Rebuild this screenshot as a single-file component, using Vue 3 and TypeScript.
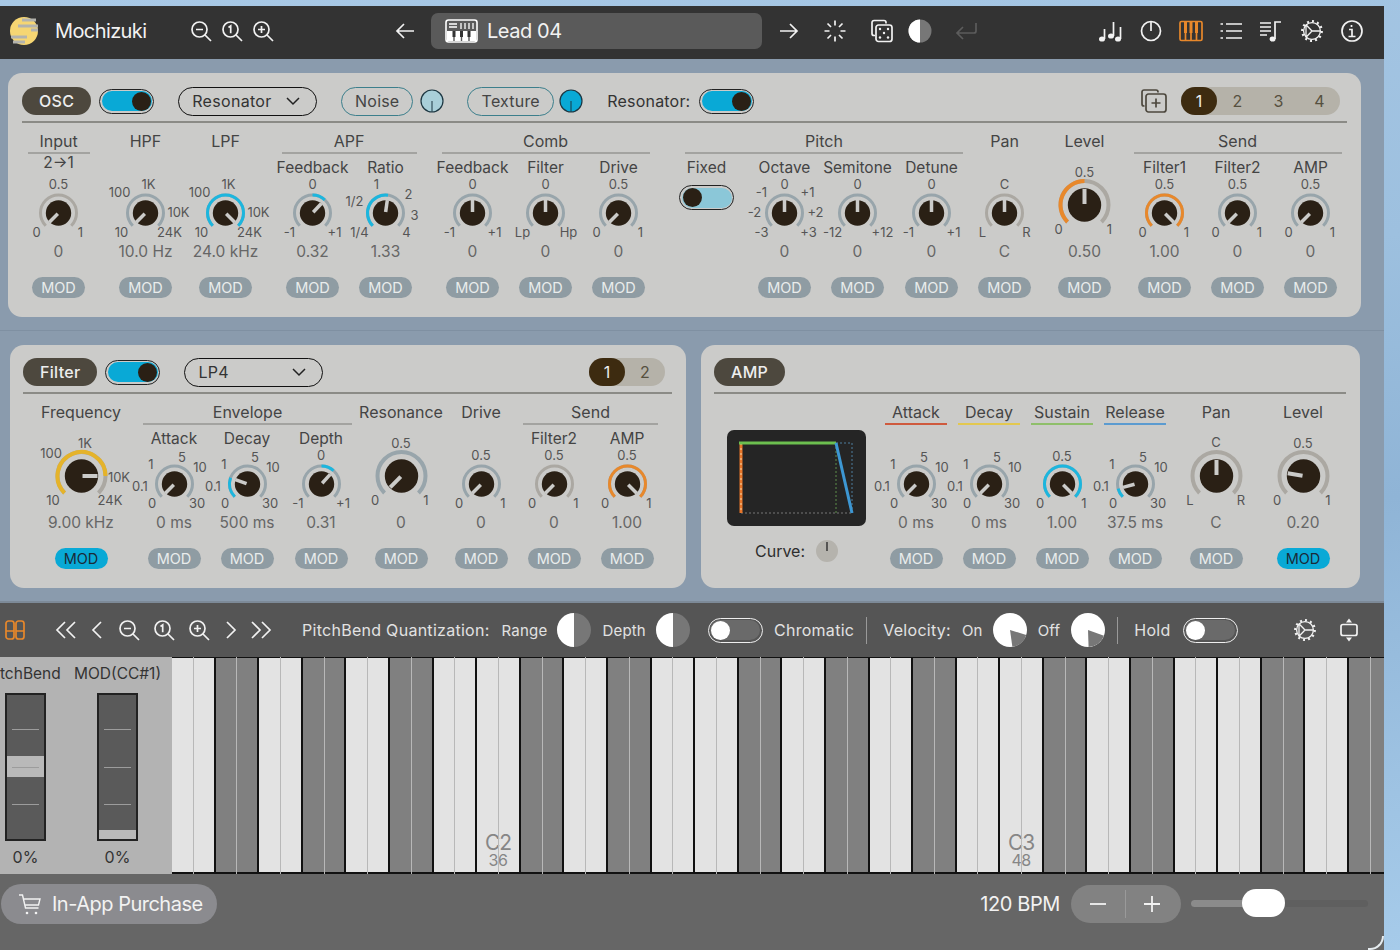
<template>
  <div class="desktop">
    <svg class="defs" width="0" height="0">
      <symbol id="zoom-out" viewBox="0 0 24 24"><circle cx="10.5" cy="10.5" r="7.5" /><path d="M16 16l6 6M7 10.5h7" /></symbol>
      <symbol id="zoom-in" viewBox="0 0 24 24"><circle cx="10.5" cy="10.5" r="7.5" /><path d="M16 16l6 6M7 10.5h7M10.5 7v7" /></symbol>
      <symbol id="zoom-one" viewBox="0 0 24 24"><circle cx="10.5" cy="10.5" r="7.5" /><path d="M16 16l6 6M8.5 8.5l2.2-1.6v7.4" /></symbol>
      <symbol id="gear" viewBox="0 0 24 24">
        <circle cx="12" cy="12" r="8.4" />
        <circle cx="12" cy="12" r="9.8" stroke-width="2.2" stroke-dasharray="2 3.1" />
        <path d="M12 12h8M12 12L6 5.8M12 12l-6 6.2M6 5.8v12.4" />
      </symbol>
    </svg>

    <div class="window">
      <header class="titlebar">
        <svg class="logo" width="30" height="30" viewBox="0 0 30 30">
          <circle cx="16" cy="15" r="14" fill="#f6d673" />
          <path d="M14 4h14M10 10h23M23 14h9M3 21h16M5 26h12" stroke="#b3b3ae" stroke-width="3" />
        </svg>
        <span class="app-name">Mochizuki</span>
        <svg class="ico"><use href="#zoom-out" /></svg>
        <svg class="ico ml-7"><use href="#zoom-one" /></svg>
        <svg class="ico ml-7"><use href="#zoom-in" /></svg>
        <svg class="ico ml-118" viewBox="0 0 24 24"><path d="M21 12H4M11 5l-7 7 7 7" /></svg>
        <div class="preset">
          <svg class="preset-ico" width="33" height="24" viewBox="0 0 33 24">
            <rect x="1" y="1" width="31" height="22" rx="2.5" fill="none" stroke="#fff" stroke-width="1.6" />
            <path d="M4 5h8M4 8h8M16 4v6M20 4v6M24 4v6M28 4v6" stroke="#fff" stroke-width="1.3" fill="none" />
            <path d="M2 12h29v10H2z" fill="#fff" />
            <path d="M9 12v10M16.5 12v10M24 12v10" stroke="#5a5a5a" stroke-width="1.4" />
            <path d="M7.5 12h3v6h-3zM15 12h3v6h-3zM22.5 12h3v6h-3z" fill="#333" />
          </svg>
          <span>Lead 04</span>
        </div>
        <svg class="ico ml-15" viewBox="0 0 24 24"><path d="M3 12h17M13 5l7 7-7 7" /></svg>
        <svg class="ico ml-22" viewBox="0 0 24 24"><path d="M12 1.5v5M12 17.5v5M1.5 12h5M17.5 12h5M4.5 4.5L8 8M16 16l3.5 3.5M19.5 4.5L16 8M8 16l-3.5 3.5" /></svg>
        <svg class="ico ml-23" viewBox="0 0 24 24">
          <path d="M16 4.5V3.5a2 2 0 0 0-2-2H4a2 2 0 0 0-2 2v11a2 2 0 0 0 2 2h1" />
          <rect x="6" y="6" width="16" height="16.5" rx="2.5" />
          <circle cx="10" cy="10" r="1.2" class="dot" /><circle cx="18" cy="10" r="1.2" class="dot" /><circle cx="14" cy="14" r="1.2" class="dot" /><circle cx="10" cy="18.5" r="1.2" class="dot" /><circle cx="18" cy="18.5" r="1.2" class="dot" />
        </svg>
        <svg class="ml-14" width="24" height="24" viewBox="0 0 24 24">
          <circle cx="12" cy="12" r="11.5" fill="#777" /><path d="M12 .5a11.5 11.5 0 0 0 0 23z" fill="#fff" />
        </svg>
        <svg class="ico ico-dim ml-22" viewBox="0 0 24 24"><path d="M22 4v8a2 2 0 0 1-2 2H3M9 8l-6 6 6 6" /></svg>

        <div class="title-right">
          <svg class="ico ico-fill" viewBox="0 0 24 24">
            <ellipse cx="4" cy="20" rx="3" ry="2.6" /><ellipse cx="13" cy="17" rx="3" ry="2.6" /><ellipse cx="20" cy="20" rx="3" ry="2.6" />
            <path class="thin" d="M6.5 20V10M15.5 17V3M22.5 20V8" />
          </svg>
          <svg class="ico" viewBox="0 0 24 24"><circle cx="12" cy="12" r="9.5" /><path d="M12 2.5V12" /></svg>
          <svg class="ico ico-orange" viewBox="0 0 24 24">
            <rect x="1" y="2.5" width="22" height="19" rx="1.5" />
            <path d="M6.5 3v18M12 3v18M17.5 3v18" />
            <path d="M5 3h3v11H5zM10.5 3h3v11h-3zM16 3h3v11h-3z" class="solid" />
          </svg>
          <svg class="ico" viewBox="0 0 24 24"><path d="M7 5h16M7 12h16M7 19h16M1.5 5h2.5M1.5 12h2.5M1.5 19h2.5" /></svg>
          <svg class="ico" viewBox="0 0 24 24">
            <path d="M1 4h11M1 8h11M1 12h11M1 16h7M16 20V3h6" />
            <ellipse cx="13.5" cy="20" rx="3" ry="2.6" class="dot" />
          </svg>
          <svg class="ico ico-gear"><use href="#gear" /></svg>
          <svg class="ico" viewBox="0 0 24 24"><circle cx="12" cy="12" r="10" /><path d="M9 10.5h3v7M8.5 17.5h7M11.5 6v2" /></svg>
        </div>
      </header>

      <main class="rack">
        <section v-for="p in panels" :key="p.name" class="panel" :class="p.cls">
          <div class="panel-head">
            <span class="name-pill">{{ p.name }}</span>
            <template v-if="p.cls === 'osc'">
              <div class="toggle ml-8"><i class="toggle-fill on"><b /></i></div>
              <div class="select ml-24"><span>Resonator</span><svg width="16" height="10" viewBox="0 0 16 10"><path d="M2 2l6 6 6-6" /></svg></div>
              <span class="src-pill noise ml-24">Noise</span>
              <svg class="mini ml-7" width="24" height="24" viewBox="0 0 24 24"><circle cx="12" cy="12" r="11" fill="#a9cfd9" /><path d="M12 12v11" /></svg>
              <span class="src-pill texture ml-23">Texture</span>
              <svg class="mini ml-5" width="24" height="24" viewBox="0 0 24 24"><circle cx="12" cy="12" r="11" fill="#09a9d6" /><path d="M12 12v11" /></svg>
              <span class="res-label ml-24">Resonator:</span>
              <div class="toggle ml-8"><i class="toggle-fill on"><b /></i></div>
            </template>
            <template v-if="p.cls === 'filter'">
              <div class="toggle ml-8"><i class="toggle-fill on"><b /></i></div>
              <div class="select ml-24"><span>LP4</span><svg width="16" height="10" viewBox="0 0 16 10"><path d="M2 2l6 6 6-6" /></svg></div>
            </template>
            <svg v-if="p.cls === 'osc'" class="layer-add" width="26" height="24" viewBox="0 0 26 24">
              <path d="M17 3.5V3a2 2 0 0 0-2-2H3a2 2 0 0 0-2 2v12a2 2 0 0 0 2 2h.5" />
              <rect x="5" y="5" width="20" height="18" rx="2.5" />
              <path d="M15 9.5v9M10.5 14h9" />
            </svg>
            <div v-if="p.tabs" class="tabs">
              <span v-for="(t, i) in p.tabs" :key="t" class="tab" :class="{ active: i === 0 }">{{ t }}</span>
            </div>
          </div>

          <div class="panel-body">
            <div v-if="p.cls === 'amp'" class="scope-col">
              <svg class="scope" width="139" height="96" viewBox="0 0 139 96">
                <rect width="139" height="96" rx="7" fill="#252525" />
                <path d="M14 83h111" stroke="#777" stroke-width="1" stroke-dasharray="2 2" fill="none" />
                <path d="M109 13v70" stroke="#5f8f4a" stroke-width="1" stroke-dasharray="2 2" fill="none" />
                <path d="M109 13h16v70" stroke="#4f7f9f" stroke-width="1" stroke-dasharray="2 2" fill="none" />
                <path d="M14 13v70" stroke="#e8762a" stroke-width="3" fill="none" />
                <path d="M14 13v70" stroke="#f3d6a8" stroke-width="1" stroke-dasharray="2 3" fill="none" />
                <path d="M12 13h97" stroke="#6cbf4f" stroke-width="3" fill="none" />
                <path d="M109 13l16 70" stroke="#3d97d3" stroke-width="3" fill="none" />
              </svg>
              <div class="curve">
                <span>Curve:</span>
                <svg width="22" height="22" viewBox="0 0 22 22"><circle cx="11" cy="11" r="11" fill="#b5b3ad" /><path d="M11 2v9" stroke="#222" stroke-width="1.3" /></svg>
              </div>
            </div>

            <div v-for="g in p.groups" :key="g.title + g.ml" class="group" :style="{ marginLeft: g.ml + 'px' }">
              <div class="g-title" :class="[g.line ? 'has-line' : '', g.cls]" :style="g.color ? { borderBottomColor: g.color } : undefined">{{ g.title }}</div>
              <div class="g-cols">
                <div v-for="k in g.knobs" :key="k.sub + k.val + k.a" class="cell" :style="{ marginLeft: (k.ml || 0) + 'px' }">
                  <div class="sub" :class="{ raised: k.sub === '2→1' }">{{ k.sub }}</div>
                  <div v-if="k.fixed" class="dial"><div class="toggle fixed-toggle"><i class="toggle-fill off"><b /></i></div></div>
                  <div v-else class="dial">
                    <svg width="73" height="62" viewBox="0 0 73 62">
                      <path :d="arc(k, -135, 135)" fill="none" :stroke="k.warm ? '#aba8a2' : '#98a5ab'" :stroke-width="k.big ? 4 : 3" />
                      <path v-if="k.tone" :d="arc(k, k.from ?? -135, k.to ?? k.a)" fill="none" :stroke="tones[k.tone]" :stroke-width="k.big ? 4 : 3" />
                      <circle cx="36.5" :cy="cy(k)" :r="k.big ? 16.7 : 12.7" fill="#2a2015" />
                      <path :d="pointer(k)" stroke="#cbcbc9" :stroke-width="k.big ? 4 : 3.5" />
                    </svg>
                    <span v-for="l in k.labels" :key="l[0]" class="tick" :style="{ left: 36.5 + l[1] + 'px', top: cy(k) + l[2] + 'px' }">{{ l[0] }}</span>
                  </div>
                  <div v-if="!k.fixed" class="val">{{ k.val }}</div>
                  <div v-if="!k.fixed" class="mod" :class="{ active: k.modOn }">MOD</div>
                </div>
              </div>
            </div>
          </div>
        </section>
      </main>

      <div class="toolbar">
        <svg class="ico ico-orange ml-3" viewBox="0 0 24 24"><rect x="3" y="3" width="8" height="18" rx="2.5" /><rect x="13" y="3" width="8" height="18" rx="2.5" /><path d="M3 13h8M13 13h8" /></svg>
        <svg class="ico ml-27" viewBox="0 0 24 24"><path d="M11 4l-8 8 8 8M21 4l-8 8 8 8" /></svg>
        <svg class="ico ml-7" viewBox="0 0 24 24"><path d="M16 4l-8 8 8 8" /></svg>
        <svg class="ico ml-8"><use href="#zoom-out" /></svg>
        <svg class="ico ml-11"><use href="#zoom-one" /></svg>
        <svg class="ico ml-11"><use href="#zoom-in" /></svg>
        <svg class="ico ml-8" viewBox="0 0 24 24"><path d="M8 4l8 8-8 8" /></svg>
        <svg class="ico ml-6" viewBox="0 0 24 24"><path d="M3 4l8 8-8 8M13 4l8 8-8 8" /></svg>
        <span class="tb-text ml-29">PitchBend Quantization:</span>
        <span class="tb-text small ml-12">Range</span>
        <svg class="ml-10" width="34" height="34" viewBox="0 0 34 34"><circle cx="17" cy="17" r="17" fill="#777" /><path d="M17 0a17 17 0 0 0 0 34z" fill="#fff" /></svg>
        <span class="tb-text small ml-11">Depth</span>
        <svg class="ml-10" width="34" height="34" viewBox="0 0 34 34"><circle cx="17" cy="17" r="17" fill="#777" /><path d="M17 0a17 17 0 0 0 0 34z" fill="#fff" /></svg>
        <div class="toggle light ml-18"><i class="toggle-fill"><b /></i></div>
        <span class="tb-text ml-11">Chromatic</span>
        <i class="tb-sep ml-12" />
        <span class="tb-text ml-16">Velocity:</span>
        <span class="tb-text small ml-11">On</span>
        <svg class="ml-10" width="34" height="34" viewBox="0 0 34 34"><circle cx="17" cy="17" r="17" fill="#fff" /><path :d="wedge(107, 172)" fill="#777" /></svg>
        <span class="tb-text small ml-11">Off</span>
        <svg class="ml-11" width="34" height="34" viewBox="0 0 34 34"><circle cx="17" cy="17" r="17" fill="#fff" /><path :d="wedge(110, 178)" fill="#777" /></svg>
        <i class="tb-sep ml-12" />
        <span class="tb-text ml-16">Hold</span>
        <div class="toggle light ml-12"><i class="toggle-fill"><b /></i></div>
        <svg class="ico ico-gear tool-gear"><use href="#gear" /></svg>
        <svg class="ico ml-20" viewBox="0 0 24 24">
          <rect x="4" y="6.5" width="16" height="11" rx="2" />
          <path class="solid" d="M12 .5l3 4H9zM12 23.5l3-4H9z" />
        </svg>
      </div>

      <div class="keys-row">
        <div class="wheels">
          <div class="wheel">
            <span class="wheel-name first">PitchBend</span>
            <div class="strip"><i class="band mid" /><i class="mark m1" /><i class="mark m2" /><i class="mark m3" /></div>
            <span class="wheel-val">0%</span>
          </div>
          <div class="wheel second">
            <span class="wheel-name">MOD(CC#1)</span>
            <div class="strip"><i class="band low" /><i class="mark m1" /><i class="mark m2" /><i class="mark m3" /></div>
            <span class="wheel-val">0%</span>
          </div>
        </div>
        <div class="keys">
          <div v-for="(key, i) in keys" :key="i" class="key" :class="key.black ? 'dark' : 'light'">
            <template v-if="key.note">
              <span class="note">{{ key.note }}</span>
              <span class="num">{{ key.num }}</span>
            </template>
          </div>
        </div>
      </div>

      <footer class="footer">
        <button class="buy">
          <svg width="24" height="24" viewBox="0 0 24 24"><path d="M1 3h3.5l3 13h13M6 7h16l-1.5 6H7.5" /><circle class="dot" cx="9" cy="21" r="1.3" /><circle class="dot" cx="18" cy="21" r="1.3" /></svg>
          <span>In-App Purchase</span>
        </button>
        <span class="bpm">120 BPM</span>
        <div class="stepper">
          <svg width="18" height="18" viewBox="0 0 18 18"><path d="M1 9h16" /></svg>
          <i />
          <svg width="18" height="18" viewBox="0 0 18 18"><path d="M1 9h16M9 1v16" /></svg>
        </div>
        <div class="slider"><i class="slider-fill" /><i class="slider-thumb" /></div>
      </footer>
      <i class="corner" />
    </div>
  </div>
</template>

<script setup lang="ts">
type Label = [string, number, number];

interface Knob {
  sub?: string;
  a: number;
  from?: number;
  to?: number;
  tone?: "cyan" | "orange" | "yellow";
  big?: boolean;
  warm?: boolean;
  fixed?: boolean;
  ml?: number;
  labels?: Label[];
  val?: string;
  modOn?: boolean;
}

interface Group {
  title: string;
  ml: number;
  line?: boolean;
  cls?: string;
  color?: string;
  knobs: Knob[];
}

interface Panel {
  name: string;
  cls: string;
  tabs?: string[];
  groups: Group[];
}

const tones = { cyan: "#1cb6de", orange: "#e8882b", yellow: "#e5b32a" };

const unit: Label[] = [["0.5", 0, -29], ["0", -22, 19], ["1", 22, 19]];
const bipolar: Label[] = [["0", 0, -29], ["-1", -23, 19], ["+1", 22, 19]];
const bigUnit: Label[] = [["0.5", 0, -33], ["0", -26, 24], ["1", 25, 24]];
const freq: Label[] = [["1K", 3, -29], ["100", -26, -21], ["10K", 33, -1], ["10", -24, 19], ["24K", 24, 19]];
const bigFreq: Label[] = [["1K", 4, -33], ["100", -30, -23], ["10K", 38, 1], ["10", -28, 24], ["24K", 29, 24]];
const time: Label[] = [["5", 8, -27], ["1", -23, -20], ["10", 26, -17], ["0.1", -34, 2], ["0", -22, 19], ["30", 23, 19]];

const panels: Panel[] = [
  {
    name: "OSC",
    cls: "osc",
    tabs: ["1", "2", "3", "4"],
    groups: [
      { title: "Input", ml: 0, line: true, knobs: [{ sub: "2→1", a: -135, warm: true, labels: unit, val: "0" }] },
      { title: "HPF", ml: 14, knobs: [{ a: -135, labels: freq, val: "10.0 Hz" }] },
      { title: "LPF", ml: 7, knobs: [{ a: 135, tone: "cyan", labels: freq, val: "24.0 kHz" }] },
      {
        title: "APF", ml: 14, line: true,
        knobs: [
          { sub: "Feedback", a: 43, from: 0, tone: "cyan", labels: bipolar, val: "0.32" },
          {
            sub: "Ratio", a: 8, tone: "cyan", val: "1.33",
            labels: [["1", -9, -29], ["2", 23, -19], ["3", 29, 2], ["4", 21, 19], ["1/4", -26, 19], ["1/2", -31, -12]],
          },
        ],
      },
      {
        title: "Comb", ml: 14, line: true,
        knobs: [
          { sub: "Feedback", a: 0, labels: bipolar, val: "0" },
          { sub: "Filter", a: 0, labels: [["0", 0, -29], ["Lp", -23, 19], ["Hp", 23, 19]], val: "0" },
          { sub: "Drive", a: -135, labels: unit, val: "0" },
        ],
      },
      {
        title: "Pitch", ml: 15, line: true, cls: "pitch",
        knobs: [
          { sub: "Fixed", a: 0, fixed: true },
          {
            sub: "Octave", a: 0, ml: 5, val: "0",
            labels: [["0", 0, -29], ["-1", -23, -21], ["+1", 23, -21], ["-2", -30, -1], ["+2", 31, -1], ["-3", -23, 19], ["+3", 24, 19]],
          },
          { sub: "Semitone", a: 0, labels: [["0", 0, -29], ["-12", -25, 19], ["+12", 25, 19]], val: "0" },
          { sub: "Detune", a: 0, ml: 1, labels: bipolar, val: "0" },
        ],
      },
      { title: "Pan", ml: 0, knobs: [{ a: 0, warm: true, labels: [["C", 0, -29], ["L", -22, 19], ["R", 22, 19]], val: "C" }] },
      { title: "Level", ml: 7, knobs: [{ a: 0, big: true, warm: true, tone: "orange", labels: bigUnit, val: "0.50" }] },
      {
        title: "Send", ml: 7, line: true,
        knobs: [
          { sub: "Filter1", a: 135, tone: "orange", labels: unit, val: "1.00" },
          { sub: "Filter2", a: -135, labels: unit, val: "0" },
          { sub: "AMP", a: -135, labels: unit, val: "0" },
        ],
      },
    ],
  },
  {
    name: "Filter",
    cls: "filter",
    tabs: ["1", "2"],
    groups: [
      { title: "Frequency", ml: 21.5, knobs: [{ a: 90, big: true, warm: true, tone: "yellow", labels: bigFreq, val: "9.00 kHz", modOn: true }] },
      {
        title: "Envelope", ml: 20, line: true,
        knobs: [
          { sub: "Attack", a: -135, labels: time, val: "0 ms" },
          { sub: "Decay", a: -70, tone: "cyan", labels: time, val: "500 ms" },
          { sub: "Depth", a: 42, ml: 1, from: 0, tone: "cyan", labels: bipolar, val: "0.31" },
        ],
      },
      { title: "Resonance", ml: 7, knobs: [{ a: -135, big: true, labels: bigUnit, val: "0" }] },
      { title: "Drive", ml: 7, knobs: [{ a: -135, labels: unit, val: "0" }] },
      {
        title: "Send", ml: 0, line: true,
        knobs: [
          { sub: "Filter2", a: -135, warm: true, labels: unit, val: "0" },
          { sub: "AMP", a: 135, tone: "orange", labels: unit, val: "1.00" },
        ],
      },
    ],
  },
  {
    name: "AMP",
    cls: "amp",
    groups: [
      { title: "Attack", ml: 13.5, line: true, color: "#cf5a3d", knobs: [{ a: -135, labels: time, val: "0 ms" }] },
      { title: "Decay", ml: 0, line: true, color: "#e3c84f", knobs: [{ a: -135, labels: time, val: "0 ms" }] },
      { title: "Sustain", ml: 0, line: true, color: "#8fbf6a", knobs: [{ a: 135, tone: "cyan", labels: [["0.5", 0, -28], ["0", -22, 19], ["1", 22, 19]], val: "1.00" }] },
      { title: "Release", ml: 0, line: true, color: "#5b9bd0", knobs: [{ a: -105, tone: "cyan", labels: time, val: "37.5 ms" }] },
      { title: "Pan", ml: 8, knobs: [{ a: 0, big: true, warm: true, labels: [["C", 0, -34], ["L", -26, 24], ["R", 25, 24]], val: "C" }] },
      { title: "Level", ml: 14, knobs: [{ a: -80, big: true, warm: true, labels: bigUnit, val: "0.20", modOn: true }] },
    ],
  },
];

// chromatic from C, key 7 of the visible range is C2
const blackAt = [false, true, false, true, false, false, true, false, true, false, true, false];
const keys = Array.from({ length: 28 }, (_, i) => {
  const semi = (i - 7 + 120) % 12;
  const key: { black: boolean; note?: string; num?: number } = { black: blackAt[semi] };
  if (i === 7) { key.note = "C2"; key.num = 36; }
  if (i === 19) { key.note = "C3"; key.num = 48; }
  return key;
});

function polar(cx: number, cy0: number, r: number, deg: number) {
  const t = (deg * Math.PI) / 180;
  return { x: cx + r * Math.sin(t), y: cy0 - r * Math.cos(t) };
}

function cy(k: Knob) {
  return k.big ? 27 : 35;
}

function arc(k: Knob, from: number, to: number) {
  const r = k.big ? 24 : 18;
  const a = Math.min(from, to);
  const b = Math.max(from, to);
  const s = polar(36.5, cy(k), r, a);
  const e = polar(36.5, cy(k), r, b);
  const large = b - a > 180 ? 1 : 0;
  return `M${s.x.toFixed(2)} ${s.y.toFixed(2)}A${r} ${r} 0 ${large} 1 ${e.x.toFixed(2)} ${e.y.toFixed(2)}`;
}

function pointer(k: Knob) {
  const s = polar(36.5, cy(k), 1, k.a);
  const e = polar(36.5, cy(k), k.big ? 16 : 13, k.a);
  return `M${s.x.toFixed(2)} ${s.y.toFixed(2)}L${e.x.toFixed(2)} ${e.y.toFixed(2)}`;
}

function wedge(from: number, to: number) {
  const s = polar(17, 17, 17, from);
  const e = polar(17, 17, 17, to);
  return `M17 17L${s.x.toFixed(2)} ${s.y.toFixed(2)}A17 17 0 0 1 ${e.x.toFixed(2)} ${e.y.toFixed(2)}Z`;
}
</script>

<style scoped>
.desktop {
  width: 1400px;
  height: 950px;
  overflow: hidden;
  padding-top: 6px;
  box-sizing: border-box;
  background: linear-gradient(170deg, #a9c9e6 0%, #9dc0df 40%, #8fb4d6 62%, #a6cbea 100%);
  font-family: Inter, "Liberation Sans", sans-serif;
  color: #444;
}

.defs {
  position: absolute;
}

.window {
  position: relative;
  width: 1384px;
  height: 944px;
  overflow: hidden;
}

.ml-3 { margin-left: 3px; }
.ml-5 { margin-left: 5px; }
.ml-6 { margin-left: 6px; }
.ml-7 { margin-left: 7px; }
.ml-8 { margin-left: 8px; }
.ml-10 { margin-left: 10px; }
.ml-11 { margin-left: 11px; }
.ml-12 { margin-left: 12px; }
.ml-14 { margin-left: 14px; }
.ml-15 { margin-left: 15px; }
.ml-16 { margin-left: 16px; }
.ml-18 { margin-left: 18px; }
.ml-20 { margin-left: 20px; }
.ml-22 { margin-left: 22px; }
.ml-23 { margin-left: 23px; }
.ml-24 { margin-left: 24px; }
.ml-27 { margin-left: 27px; }
.ml-29 { margin-left: 29px; }
.ml-118 { margin-left: 118px; }

.ico {
  width: 24px;
  height: 24px;
  flex: none;
  fill: none;
  stroke: #f2f2f2;
  stroke-width: 1.7;
}

.ico .dot, .ico .solid {
  fill: #f2f2f2;
  stroke: none;
}

.ico-dim {
  stroke: #5c5c5c;
}

.ico-fill {
  fill: #f2f2f2;
  stroke: none;
}

.ico-fill .thin {
  fill: none;
  stroke: #f2f2f2;
  stroke-width: 1.7;
}

.ico-orange {
  stroke: #e8882b;
}

.ico-orange .solid {
  fill: #e8882b;
}

.ico-gear {
  stroke-width: 1.3;
}

/* title bar */
.titlebar {
  height: 53px;
  background: #333;
  display: flex;
  align-items: center;
  padding: 0 20px 3px 8px;
  box-sizing: border-box;
  color: #f2f2f2;
}

.logo {
  flex: none;
}

.app-name {
  width: 134px;
  margin-left: 17px;
  font-size: 20px;
  letter-spacing: -0.6px;
}

.preset {
  width: 331px;
  height: 36px;
  margin-left: 14px;
  background: #5a5a5a;
  border-radius: 7px;
  display: flex;
  align-items: center;
  padding-left: 14px;
  box-sizing: border-box;
  font-size: 20px;
  letter-spacing: -0.45px;
}

.preset span {
  margin-left: 9px;
}

.title-right {
  margin-left: auto;
  display: flex;
  gap: 16.3px;
}

/* rack */
.rack {
  height: 544px;
  box-sizing: border-box;
  padding: 14px 0 0 8px;
  background: linear-gradient(#7f90a2, #7f90a2) no-repeat 0 271px / 100% 1px, #8a9bad;
  display: flex;
  flex-wrap: wrap;
  align-content: flex-start;
  column-gap: 15px;
  row-gap: 28px;
  border-bottom: 2px solid #7d8a98;
}

.panel {
  background: #cbcbc9;
  border-radius: 14px;
  box-sizing: border-box;
  padding: 14px 14px 0 13px;
}

.panel.osc {
  width: 1353px;
  height: 244px;
  padding-left: 14px;
}

.panel.filter {
  width: 676px;
  height: 243px;
  margin-left: 2px;
  padding-top: 13px;
}

.panel.amp {
  width: 659px;
  height: 243px;
  padding-top: 13px;
}

.panel-head {
  height: 28px;
  display: flex;
  align-items: center;
  padding-bottom: 6px;
  border-bottom: 2px solid #8b8b86;
  box-sizing: content-box;
}

.name-pill {
  height: 28px;
  line-height: 28px;
  padding: 0 17px;
  border-radius: 14px;
  background: #4d483e;
  color: #eee;
  font-size: 16px;
  font-weight: 500;
  letter-spacing: 0.3px;
}

.toggle {
  width: 55px;
  height: 25px;
  box-sizing: border-box;
  border: 1.5px solid #222;
  border-radius: 13px;
  padding: 1.5px;
  flex: none;
}

.toggle-fill {
  display: flex;
  height: 100%;
  border-radius: 10px;
  align-items: center;
  padding: 0 1px;
}

.toggle-fill b {
  display: block;
  width: 19px;
  height: 19px;
  border-radius: 50%;
  background: #2a2015;
}

.toggle-fill.on {
  background: #09a9d6;
  justify-content: flex-end;
}

.toggle-fill.off {
  background: #8bc7d8;
}

.toggle.light {
  border-color: #eee;
}

.toggle.light .toggle-fill {
  background: #6a6a6a;
}

.toggle.light .toggle-fill b {
  background: #fff;
}

.select {
  width: 139px;
  height: 29px;
  box-sizing: border-box;
  border: 1.5px solid #111;
  border-radius: 15px;
  display: flex;
  align-items: center;
  justify-content: space-between;
  padding: 0 15px 0 13px;
  font-size: 16px;
  letter-spacing: 0.3px;
  color: #333;
}

.select svg {
  fill: none;
  stroke: #222;
  stroke-width: 1.5;
}

.src-pill {
  height: 29px;
  line-height: 26px;
  box-sizing: border-box;
  border: 1.5px solid #3c7f8c;
  border-radius: 15px;
  text-align: center;
  font-size: 16px;
  letter-spacing: 0.2px;
  color: #444;
}

.noise { width: 72px; }
.texture { width: 87px; }

.mini {
  flex: none;
}

.mini circle {
  stroke: #1d3742;
  stroke-width: 1.2;
}

.mini path {
  stroke: #1d3742;
  stroke-width: 1;
}

.res-label {
  width: 84px;
  font-size: 16px;
  letter-spacing: 0.2px;
  white-space: nowrap;
  color: #333;
}

.layer-add {
  margin-left: auto;
  margin-right: 14px;
  fill: none;
  stroke: #4d483e;
  stroke-width: 1.7;
}

.tabs {
  display: flex;
  height: 28px;
  margin-right: 7px;
  border-radius: 14px;
  background: #b5b2a9;
  font-size: 16px;
  color: #55503f;
  line-height: 28px;
  text-align: center;
}

.panel.filter .tabs {
  margin-left: auto;
}

.tab {
  width: 41px;
}

.panel.filter .tab {
  width: 40px;
}

.panel .tab.active {
  width: 36px;
  border-radius: 14px;
  background: #3d2b10;
  color: #eee;
}

.panel-body {
  display: flex;
  padding-top: 8px;
}

.group {
  flex: none;
}

/* width comes from the knob columns, long titles just overflow both ways */
.g-title {
  height: 23px;
  line-height: 20px;
  box-sizing: border-box;
  display: flex;
  justify-content: center;
  width: 0;
  min-width: calc(100% - 11px);
  white-space: nowrap;
  font-size: 16px;
  margin: 0 5.5px;
  border-bottom: 2px solid transparent;
}

.g-title.has-line {
  border-bottom-color: #a3a3a0;
}

.g-title.pitch {
  margin-left: 15px;
  min-width: calc(100% - 20px);
}

.g-cols {
  display: flex;
}

.cell {
  width: 73px;
  flex: none;
  text-align: center;
}

.sub {
  height: 24px;
  line-height: 27px;
  font-size: 15.5px;
  white-space: nowrap;
}

.sub.raised {
  line-height: 17px;
}

.dial {
  position: relative;
  height: 62px;
}

.dial svg {
  display: block;
}

.fixed-toggle {
  margin: 7px 0 0 9px;
}

.tick {
  position: absolute;
  transform: translate(-50%, -50%);
  font-size: 13px;
  color: #555;
  white-space: nowrap;
}

.val {
  height: 22px;
  line-height: 22px;
  margin-top: 1px;
  font-size: 15.5px;
  color: #666;
  white-space: nowrap;
}

.mod {
  width: 53px;
  height: 21px;
  line-height: 21px;
  margin: 14px auto 0;
  border-radius: 11px;
  background: #8f9ca3;
  color: #e9ecec;
  font-size: 14.5px;
}

.mod.active {
  background: #09a9d6;
  color: #1a2a38;
}

.scope-col {
  width: 139px;
  margin: 28px 0 0 13px;
  flex: none;
}

.scope {
  display: block;
}

.curve {
  display: flex;
  align-items: center;
  margin: 14px 0 0 28px;
  gap: 11px;
  font-size: 16px;
  color: #2e2e2e;
}

/* toolbar */
.toolbar {
  height: 54px;
  background: #555;
  display: flex;
  align-items: center;
}

.tb-text {
  font-size: 16px;
  letter-spacing: 0.28px;
  color: #e2e2e2;
  white-space: nowrap;
  flex: none;
}

.tb-text.small {
  font-size: 15px;
  letter-spacing: 0.2px;
}

.tb-sep {
  width: 1px;
  height: 27px;
  background: #999;
  flex: none;
}

.tool-gear {
  margin-left: 55px;
}

/* keyboard */
.keys-row {
  height: 217px;
  display: flex;
}

.wheels {
  width: 172px;
  flex: none;
  display: flex;
  background: #b3b3b3;
  overflow: hidden;
  padding-left: 5px;
  box-sizing: border-box;
}

.wheel {
  width: 41px;
  flex: none;
  display: flex;
  flex-direction: column;
  align-items: center;
}

.wheel.second {
  margin-left: 51px;
}

.wheel-name {
  height: 36px;
  line-height: 33px;
  font-size: 15.5px;
  color: #333;
  white-space: nowrap;
}

.wheel-name.first {
  transform: translateX(-2px);
}

.wheel-val {
  margin-top: 6px;
  font-size: 16px;
  color: #333;
}

.strip {
  position: relative;
  width: 41px;
  height: 148px;
  flex: none;
  box-sizing: border-box;
  border: 2px solid #222;
  background: #5a5a5a;
}

.band {
  position: absolute;
  left: 0;
  right: 0;
  background: #b9b9b9;
}

.band.mid {
  top: 61px;
  height: 21px;
}

.band.low {
  bottom: 0;
  height: 9px;
}

.mark {
  position: absolute;
  left: 5px;
  right: 5px;
  height: 1px;
  background: #9c9c9c;
}

.m1 { top: 34px; }
.m2 { top: 72px; }
.m3 { top: 109px; }

.keys {
  flex: 1;
  display: flex;
  overflow: hidden;
  background: #111;
  padding: 1px 0 2px;
}

.key {
  position: relative;
  width: 41.6px;
  flex: none;
  margin-right: 2px;
  display: flex;
  flex-direction: column;
  align-items: center;
  justify-content: flex-end;
  padding-bottom: 4px;
  box-sizing: border-box;
  color: #868686;
}

.key::after {
  content: "";
  position: absolute;
  left: 50%;
  top: -1px;
  bottom: -2px;
  width: 1px;
  background: #b8b8b8;
}

.key.light {
  background: #e3e3e3;
}

.key.dark {
  background: #808080;
}

.note {
  font-size: 21px;
  line-height: 18px;
  letter-spacing: -1px;
}

.num {
  font-size: 16px;
  line-height: 16px;
  letter-spacing: -0.5px;
}

/* footer */
.footer {
  height: 76px;
  background: #666;
  display: flex;
  align-items: flex-start;
  color: #f2f2f2;
}

.buy {
  width: 216px;
  height: 40px;
  margin: 10px 0 0 1px;
  border: none;
  border-radius: 20px;
  background: #8b8b8f;
  color: #f2f2f2;
  display: flex;
  align-items: center;
  padding: 0 0 0 17px;
  font-family: inherit;
  font-size: 20px;
}

.buy svg {
  fill: none;
  stroke: #f2f2f2;
  stroke-width: 1.4;
}

.buy .dot {
  fill: #f2f2f2;
  stroke: none;
}

.buy span {
  margin-left: 10px;
  letter-spacing: -0.5px;
}

.bpm {
  margin: 18px 0 0 auto;
  font-size: 20px;
  letter-spacing: -0.4px;
  line-height: 24px;
}

.stepper {
  width: 110px;
  height: 38px;
  margin: 11px 0 0 11px;
  border-radius: 19px;
  background: #828282;
  display: flex;
  align-items: center;
  justify-content: space-between;
  padding: 0 20px 0 18px;
  box-sizing: border-box;
}

.stepper svg {
  fill: none;
  stroke: #f2f2f2;
  stroke-width: 1.8;
}

.stepper i {
  width: 1px;
  height: 28px;
  background: #9a9a9a;
}

.slider {
  position: relative;
  width: 177px;
  height: 7px;
  margin: 26px 16px 0 10px;
  border-radius: 4px;
  background: #5f5f5f;
}

.slider-fill {
  position: absolute;
  left: 0;
  top: 0;
  bottom: 0;
  width: 60px;
  border-radius: 4px;
  background: #8b8b8b;
}

.slider-thumb {
  position: absolute;
  left: 51px;
  top: -11px;
  width: 43px;
  height: 28px;
  border-radius: 14px;
  background: #fff;
}

.corner {
  position: absolute;
  right: 0;
  bottom: 0;
  width: 16px;
  height: 14px;
  border-right: 2.5px solid #e6ecef;
  border-bottom: 2.5px solid #e6ecef;
  border-bottom-right-radius: 14px;
  box-sizing: border-box;
}
</style>
